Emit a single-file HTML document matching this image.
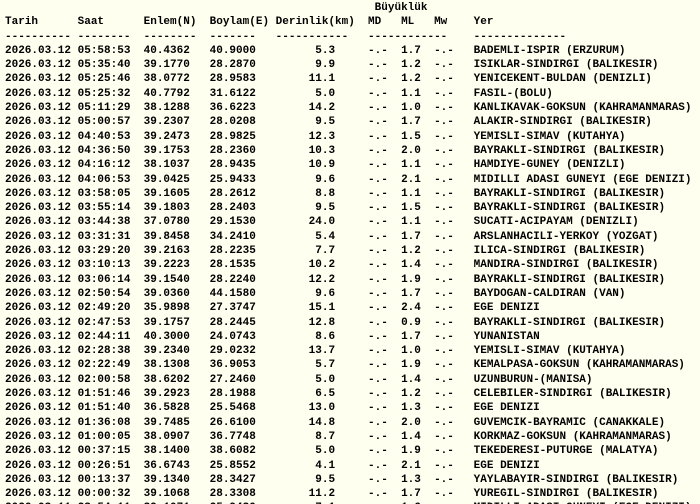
<!DOCTYPE html>
<html><head><meta charset="utf-8"><style>
html,body{margin:0;padding:0;background:#fffff0;width:700px;height:504px;overflow:hidden}
pre{margin:0;padding:1px 0 0 5px;font-family:"Liberation Mono",monospace;font-weight:bold;font-size:11px;line-height:14.3px;color:#000}
</style></head><body><pre>                                                        Büyüklük
Tarih      Saat      Enlem(N)  Boylam(E) Derinlik(km)  MD   ML   Mw    Yer
---------- --------  --------  -------   -----------   ------------    --------------
2026.03.12 05:58:53  40.4362   40.9000         5.3     -.-  1.7  -.-   BADEMLI-ISPIR (ERZURUM)
2026.03.12 05:35:40  39.1770   28.2870         9.9     -.-  1.2  -.-   ISIKLAR-SINDIRGI (BALIKESIR)
2026.03.12 05:25:46  38.0772   28.9583        11.1     -.-  1.2  -.-   YENICEKENT-BULDAN (DENIZLI)
2026.03.12 05:25:32  40.7792   31.6122         5.0     -.-  1.1  -.-   FASIL-(BOLU)
2026.03.12 05:11:29  38.1288   36.6223        14.2     -.-  1.0  -.-   KANLIKAVAK-GOKSUN (KAHRAMANMARAS)
2026.03.12 05:00:57  39.2307   28.0208         9.5     -.-  1.7  -.-   ALAKIR-SINDIRGI (BALIKESIR)
2026.03.12 04:40:53  39.2473   28.9825        12.3     -.-  1.5  -.-   YEMISLI-SIMAV (KUTAHYA)
2026.03.12 04:36:50  39.1753   28.2360        10.3     -.-  2.0  -.-   BAYRAKLI-SINDIRGI (BALIKESIR)
2026.03.12 04:16:12  38.1037   28.9435        10.9     -.-  1.1  -.-   HAMDIYE-GUNEY (DENIZLI)
2026.03.12 04:06:53  39.0425   25.9433         9.6     -.-  2.1  -.-   MIDILLI ADASI GUNEYI (EGE DENIZI)
2026.03.12 03:58:05  39.1605   28.2612         8.8     -.-  1.1  -.-   BAYRAKLI-SINDIRGI (BALIKESIR)
2026.03.12 03:55:14  39.1803   28.2403         9.5     -.-  1.5  -.-   BAYRAKLI-SINDIRGI (BALIKESIR)
2026.03.12 03:44:38  37.0780   29.1530        24.0     -.-  1.1  -.-   SUCATI-ACIPAYAM (DENIZLI)
2026.03.12 03:31:31  39.8458   34.2410         5.4     -.-  1.7  -.-   ARSLANHACILI-YERKOY (YOZGAT)
2026.03.12 03:29:20  39.2163   28.2235         7.7     -.-  1.2  -.-   ILICA-SINDIRGI (BALIKESIR)
2026.03.12 03:10:13  39.2223   28.1535        10.2     -.-  1.4  -.-   MANDIRA-SINDIRGI (BALIKESIR)
2026.03.12 03:06:14  39.1540   28.2240        12.2     -.-  1.9  -.-   BAYRAKLI-SINDIRGI (BALIKESIR)
2026.03.12 02:50:54  39.0360   44.1580         9.6     -.-  1.7  -.-   BAYDOGAN-CALDIRAN (VAN)
2026.03.12 02:49:20  35.9898   27.3747        15.1     -.-  2.4  -.-   EGE DENIZI
2026.03.12 02:47:53  39.1757   28.2445        12.8     -.-  0.9  -.-   BAYRAKLI-SINDIRGI (BALIKESIR)
2026.03.12 02:44:11  40.3000   24.0743         8.6     -.-  1.7  -.-   YUNANISTAN
2026.03.12 02:28:38  39.2340   29.0232        13.7     -.-  1.0  -.-   YEMISLI-SIMAV (KUTAHYA)
2026.03.12 02:22:49  38.1308   36.9053         5.7     -.-  1.9  -.-   KEMALPASA-GOKSUN (KAHRAMANMARAS)
2026.03.12 02:00:58  38.6202   27.2460         5.0     -.-  1.4  -.-   UZUNBURUN-(MANISA)
2026.03.12 01:51:46  39.2923   28.1988         6.5     -.-  1.2  -.-   CELEBILER-SINDIRGI (BALIKESIR)
2026.03.12 01:51:40  36.5828   25.5468        13.0     -.-  1.3  -.-   EGE DENIZI
2026.03.12 01:36:08  39.7485   26.6100        14.8     -.-  2.0  -.-   GUVEMCIK-BAYRAMIC (CANAKKALE)
2026.03.12 01:00:05  38.0907   36.7748         8.7     -.-  1.4  -.-   KORKMAZ-GOKSUN (KAHRAMANMARAS)
2026.03.12 00:37:15  38.1400   38.6082         5.0     -.-  1.9  -.-   TEKEDERESI-PUTURGE (MALATYA)
2026.03.12 00:26:51  36.6743   25.8552         4.1     -.-  2.1  -.-   EGE DENIZI
2026.03.12 00:13:37  39.1340   28.3427         9.5     -.-  1.3  -.-   YAYLABAYIR-SINDIRGI (BALIKESIR)
2026.03.12 00:00:32  39.1068   28.3308        11.2     -.-  1.7  -.-   YUREGIL-SINDIRGI (BALIKESIR)
2026.03.11 23:54:11  39.1071   25.9430         7.1     -.-  1.6  -.-   MIDILLI ADASI GUNEYI (EGE DENIZI)
</pre></body></html>
